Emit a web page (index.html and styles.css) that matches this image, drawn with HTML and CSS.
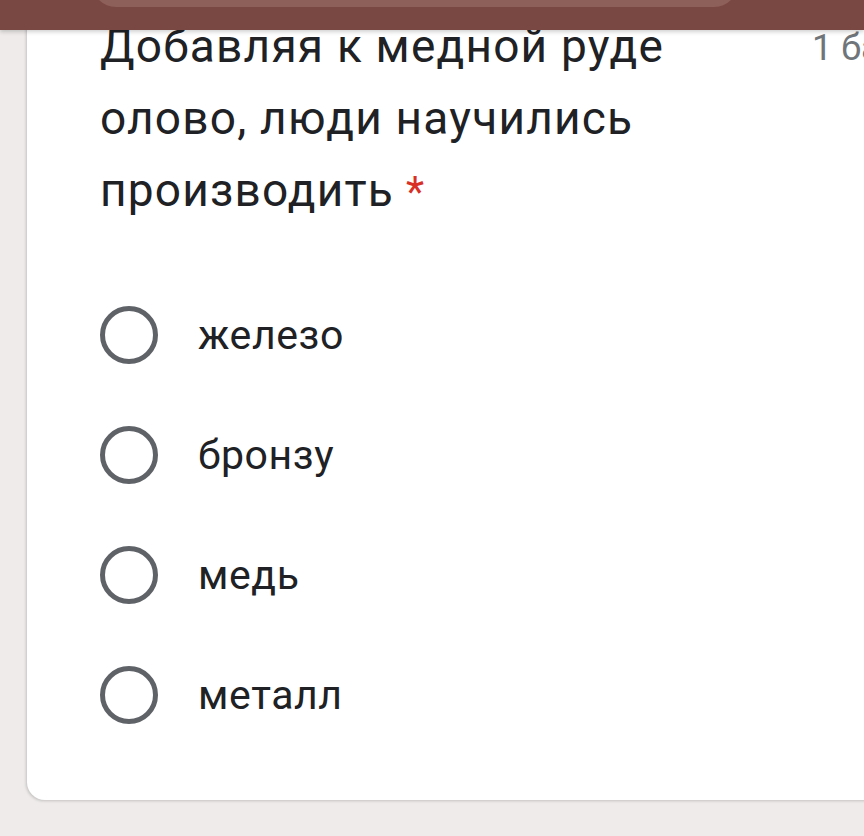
FILE: index.html
```html
<!DOCTYPE html>
<html lang="ru">
<head>
<meta charset="utf-8">
<link rel="stylesheet" href="styles.css">
</head>
<body>
<header class="topbar">
  <div class="pill"></div>
</header>
<main class="card">
  <div class="question-head">
    <div class="question-title">Добавляя к медной руде олово, люди научились производить<span class="required">*</span></div>
    <div class="points">1 балл</div>
  </div>
  <ul class="options">
    <li class="option"><span class="radio"></span><span class="label">железо</span></li>
    <li class="option"><span class="radio"></span><span class="label">бронзу</span></li>
    <li class="option"><span class="radio"></span><span class="label">медь</span></li>
    <li class="option"><span class="radio"></span><span class="label">металл</span></li>
  </ul>
</main>
</body>
</html>
```
FILE: styles.css
```css
html, body {
  margin: 0;
  padding: 0;
}
body {
  background: #eeebea;
  width: 864px;
  height: 836px;
  overflow: hidden;
  font-family: Roboto, "Noto Sans", sans-serif;
  color: #202124;
}
.topbar {
  position: relative;
  z-index: 2;
  height: 30px;
  background: #7a4842;
  box-shadow: 0 2px 4px rgba(0,0,0,0.18);
  overflow: hidden;
}
.pill {
  margin: -40px 0 0 92px;
  width: 646px;
  height: 47px;
  border-radius: 0 0 24px 24px;
  background: #8e605a;
}
.card {
  position: relative;
  z-index: 1;
  margin: -20px -30px 0 27px;
  height: 790px;
  background: #ffffff;
  border-radius: 0 0 0 18px;
  box-shadow: -1px 1px 3px rgba(0,0,0,0.18);
  box-sizing: border-box;
  padding-left: 73px;
}
.question-head {
  display: flex;
  align-items: flex-start;
}
.question-title {
  width: 620px;
  flex: none;
  font-size: 46px;
  letter-spacing: 1.2px;
  line-height: 72px;
  color: #202124;
}
.required {
  color: #d93025;
  font-size: 42px;
  line-height: 1;
  margin-left: 12px;
}
.points {
  margin-left: 92px;
  font-size: 36px;
  line-height: 72px;
  color: #70757a;
  white-space: nowrap;
  padding-top: 2px;
}
.options {
  list-style: none;
  margin: 49px 0 0 0;
  padding: 0;
}
.option {
  display: flex;
  align-items: center;
  height: 120px;
}
.radio {
  width: 48px;
  height: 48px;
  border: 5px solid #5f6368;
  border-radius: 50%;
  flex: none;
}
.label {
  margin-left: 40px;
  font-size: 41px;
  letter-spacing: 0.6px;
  color: #202124;
}
```
